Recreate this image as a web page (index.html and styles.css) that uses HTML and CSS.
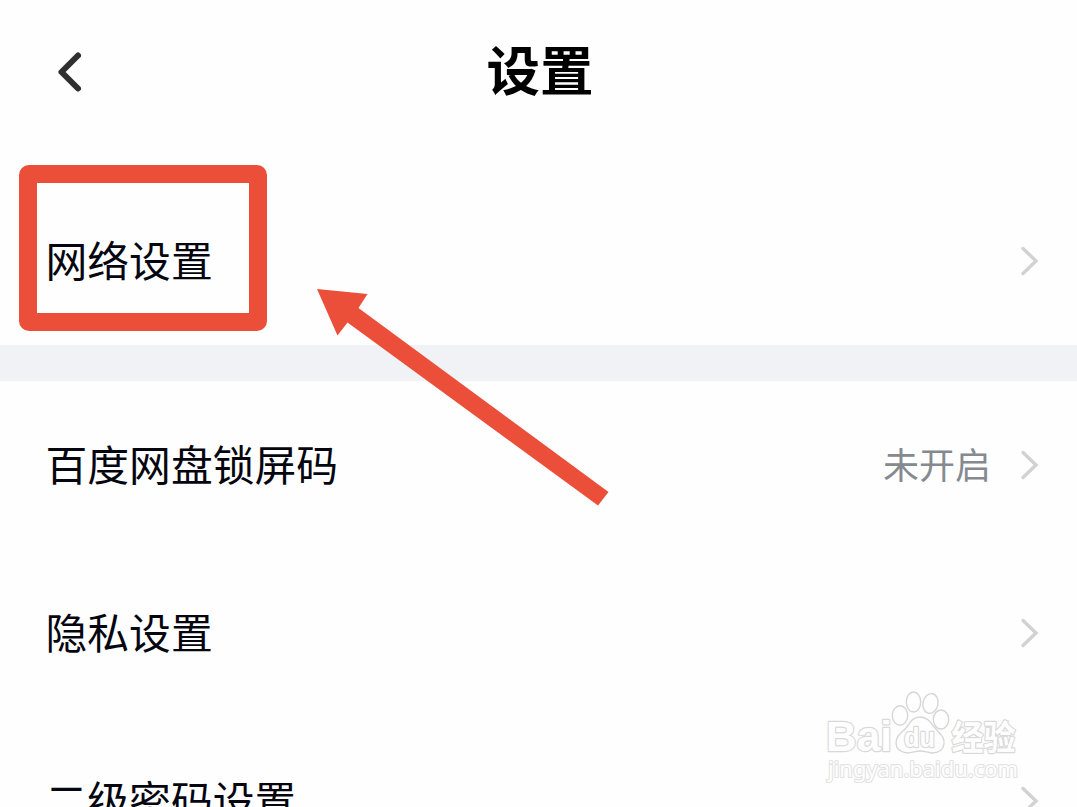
FILE: index.html
```html
<!DOCTYPE html>
<html lang="zh-CN">
<head>
    <meta charset="UTF-8">
    <meta name="viewport" content="width=device-width, initial-scale=1.0">
    <title>设置</title>
    <link rel="stylesheet" href="styles.css">
</head>
<body>

    <div class="page">
        <header class="header">
            <svg class="back" viewBox="0 0 26 42">
                <path d="M21 4.5L4.5 21L21 37.5"/>
            </svg>
            <h1>设置</h1>
        </header>

        <div class="row">
            <span class="label">网络设置</span>
            <svg class="chevron" viewBox="0 0 20 32"><path d="M3 3.5L16 16L3 28.5"/></svg>
        </div>

        <div class="divider"></div>

        <div class="row">
            <span class="label">百度网盘锁屏码</span>
            <span class="value">未开启</span>
            <svg class="chevron" viewBox="0 0 20 32"><path d="M3 3.5L16 16L3 28.5"/></svg>
        </div>
        <div class="row">
            <span class="label">隐私设置</span>
            <svg class="chevron" viewBox="0 0 20 32"><path d="M3 3.5L16 16L3 28.5"/></svg>
        </div>
        <div class="row">
            <span class="label">二级密码设置</span>
            <svg class="chevron" viewBox="0 0 20 32"><path d="M3 3.5L16 16L3 28.5"/></svg>
        </div>

        <!-- Red frame and arrow over the first row -->
        <div class="highlight"></div>
        <svg class="arrow" viewBox="0 0 294 218">
            <path d="M1 1L51.5 6L42.5 20L292.5 204L282 217.5L31.5 34.5L21.5 47.5Z"/>
        </svg>

        <!-- Watermark -->
        <svg class="watermark" viewBox="0 0 200 96">
            <text class="logo" x="1" y="61" textLength="66" lengthAdjust="spacingAndGlyphs">Bai</text>
            <ellipse cx="75" cy="25.5" rx="7.7" ry="9.8"/>
            <ellipse cx="88.5" cy="12" rx="7.2" ry="10"/>
            <ellipse cx="105.5" cy="13.5" rx="7.5" ry="10" transform="rotate(12 105.5 13.5)"/>
            <ellipse cx="116" cy="29.5" rx="7.7" ry="9.5"/>
            <path d="M95 27C103 27 106 33 110 38C115 44 120 47 119 54C118 61 113 63 107 63C101 62 99 61 95 61C91 61 87 63 82 63C75 62 71 59 71 53C71 46 76 43 81 38C85 33 87 27 95 27Z"/>
            <text class="du" x="79" y="57" textLength="31" lengthAdjust="spacingAndGlyphs">du</text>
            <text class="name" x="126.5" y="60" textLength="64" lengthAdjust="spacingAndGlyphs">经验</text>
            <text class="url" x="3" y="87" textLength="190" lengthAdjust="spacingAndGlyphs">jingyan.baidu.com</text>
        </svg>
    </div>

</body>
</html>
```

FILE: styles.css
```css
* {
    margin: 0;
    padding: 0;
    box-sizing: border-box;
}

body {
    font-family: "Noto Sans CJK SC", sans-serif;
    background-color: #fefefe;
    color: #05060f;
}

.page {
    position: relative;
    height: 807px;
    overflow: hidden;
}

.header {
    display: grid;
    grid-template-columns: 1fr auto 1fr;
    align-items: center;
    height: 177px;
    padding: 0 54px 33px 57px;
}

.back {
    width: 26px;
    height: 42px;
    fill: none;
    stroke: #2f2f30;
    stroke-width: 6;
    stroke-linecap: round;
    stroke-linejoin: round;
}

h1 {
    padding-bottom: 9px;
    font-size: 53.5px;
    font-weight: bold;
    line-height: 76px;
    color: #000;
}

.row {
    display: flex;
    align-items: center;
    height: 168px;
    padding: 0 37px 0 45.5px;
}

.label {
    flex: 1;
    padding-bottom: 5px;
    font-size: 41.8px;
    line-height: 60px;
}

.value {
    margin-right: 29px;
    padding-bottom: 4px;
    font-size: 36px;
    color: #858a91;
}

.chevron {
    width: 20px;
    height: 32px;
    margin-bottom: 1px;
    fill: none;
    stroke: #d2d2d2;
    stroke-width: 3.4;
    stroke-linecap: round;
}

.divider {
    height: 36px;
    background-color: #f1f2f6;
}

.highlight {
    position: absolute;
    left: 19px;
    top: 165px;
    width: 248px;
    height: 166px;
    border: 18px solid #eb4e39;
    border-radius: 10px;
}

.arrow {
    position: absolute;
    left: 316px;
    top: 288px;
    width: 294px;
    height: 218px;
    fill: #eb4e39;
}

.watermark {
    position: absolute;
    left: 825px;
    top: 690px;
    width: 200px;
    height: 96px;
    overflow: visible;
    fill: #fefefe;
    stroke: #d6d6d6;
    stroke-width: 1.4;
    font-family: "Noto Sans", sans-serif;
    font-weight: bold;
}

/* White letters with a thin grey outline */
.watermark text {
    stroke: #d9d9d9;
    stroke-width: 2.4;
    stroke-linejoin: round;
    paint-order: stroke;
}

.watermark .logo {
    font-family: "Liberation Sans", sans-serif;
    font-size: 43px;
}

.watermark .du {
    font-family: "Liberation Sans", sans-serif;
    font-size: 27px;
}

.watermark .name {
    font-family: "Noto Sans CJK SC", sans-serif;
    font-size: 34px;
}

.watermark .url {
    font-size: 22px;
    font-weight: normal;
    stroke: #e2e2e2;
    stroke-width: 2.2;
}
```
